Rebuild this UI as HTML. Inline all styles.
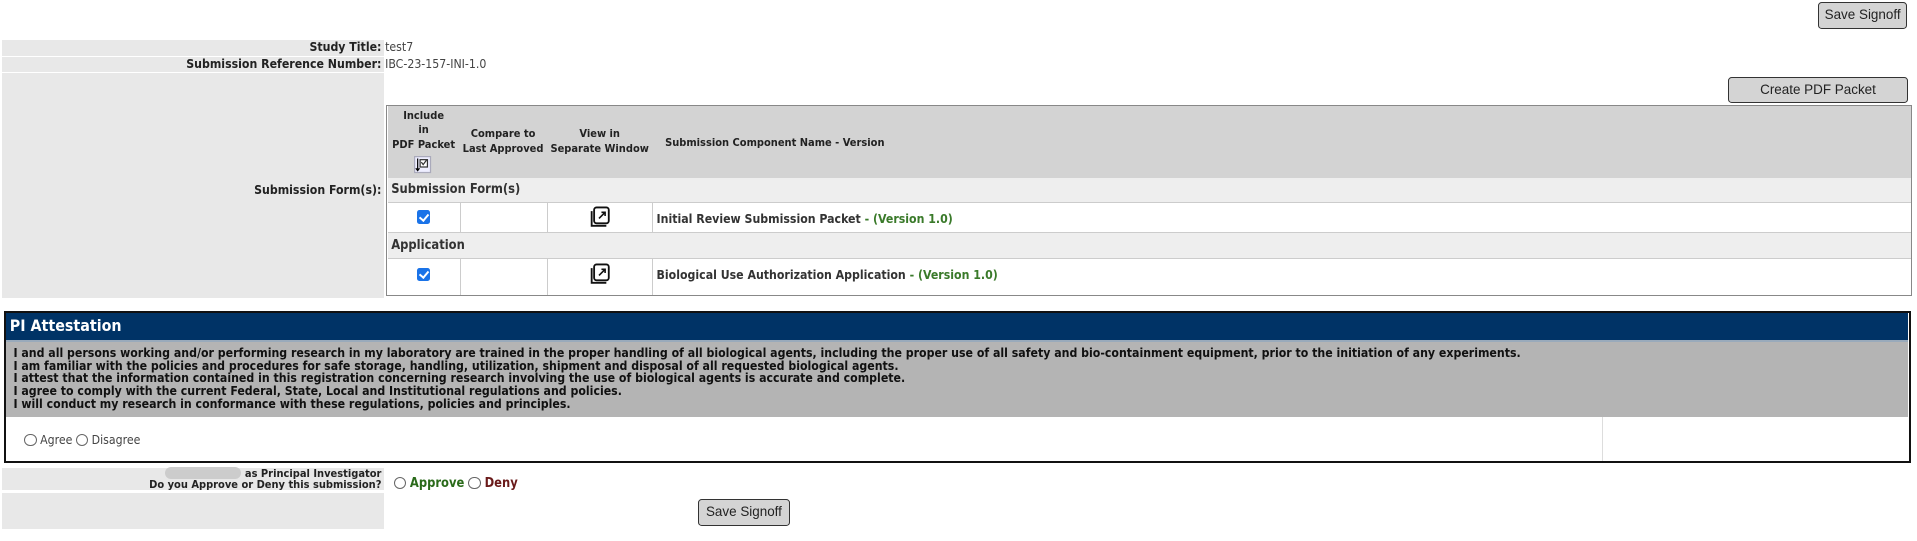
<!DOCTYPE html>
<html><head><meta charset="utf-8"><style>
*{box-sizing:border-box;margin:0;padding:0}
html,body{width:1917px;height:541px;overflow:hidden;background:#fff}
#w{zoom:1.2226;width:1568px;height:443px;position:relative;font-family:"DejaVu Sans Condensed","DejaVu Sans",sans-serif;font-size:10px;color:#222}
.abs{position:absolute}
.btn{position:absolute;background:#d4d4d4;border:1px solid #333;border-radius:3px;font-family:"Liberation Sans",sans-serif;font-size:11px;color:#222;text-align:center}
.lbl{position:absolute;background:#e8e8e8;font-weight:bold;text-align:right;padding-right:2px;font-size:10px}
.b{font-weight:bold}
.cb{position:absolute;width:11px;height:11px;background:#1a73e8;border-radius:2px}
.cb:after{content:"";position:absolute;left:3.5px;top:1px;width:3px;height:6px;border:solid #fff;border-width:0 2px 2px 0;transform:rotate(40deg)}
.radio{display:inline-block;width:10px;height:10px;border:1px solid #666;border-radius:50%;vertical-align:-2px;background:#fff}
.vline{position:absolute;width:1px;background:#ccc}
.ico{position:absolute}
</style></head><body><div id="w">
<div class="btn" style="left:1487px;top:2px;width:73px;height:22px;line-height:20px">Save Signoff</div>

<div class="lbl" style="left:2px;top:33px;width:312px;height:13px;line-height:13px">Study Title:</div>
<div class="abs" style="left:315px;top:33px;line-height:13px;color:#444">test7</div>
<div class="lbl" style="left:2px;top:47px;width:312px;height:12px;line-height:12px">Submission Reference Number:</div>
<div class="abs" style="left:315px;top:47px;line-height:12px;color:#444">IBC-23-157-INI-1.0</div>
<div class="lbl" style="left:2px;top:60px;width:312px;height:184px;line-height:192px">Submission Form(s):</div>

<div class="btn" style="left:1413px;top:63px;width:148px;height:21px;line-height:19px">Create PDF Packet</div>

<div class="abs" style="left:316px;top:86px;width:1248px;height:156px;border:1px solid #888;background:#fff"></div>
<div class="abs" style="left:317px;top:87px;width:1246px;height:59px;background:#d3d3d3"></div>
<div class="abs b" style="left:317px;top:89px;width:59px;text-align:center;font-size:9px;line-height:12px">Include<br>in<br>PDF Packet</div>
<svg class="ico" style="left:339px;top:128px" width="14" height="14" viewBox="0 0 14 14"><rect x="0.5" y="0.5" width="13" height="13" fill="#eef" stroke="#aab"/><rect x="5" y="3" width="6" height="6" fill="#fff" stroke="#333"/><path d="M6 5l1.5 2 3-4" fill="none" stroke="#333"/><path d="M3 2v10M1.5 10l1.5 2 1.5-2" fill="none" stroke="#000"/></svg>
<div class="abs b" style="left:376px;top:104px;width:71px;text-align:center;font-size:9px;line-height:12px">Compare to<br>Last Approved</div>
<div class="abs b" style="left:447px;top:104px;width:87px;text-align:center;font-size:9px;line-height:12px">View in<br>Separate Window</div>
<div class="abs b" style="left:544px;top:111px;font-size:9px;line-height:12px">Submission Component Name - Version</div>

<div class="abs" style="left:317px;top:146px;width:1246px;height:20px;background:#eee;border-bottom:1px solid #ccc"></div>
<div class="abs b" style="left:320px;top:149px;font-size:10.5px;color:#333">Submission Form(s)</div>
<div class="abs" style="left:317px;top:190px;width:1246px;height:22px;background:#eee;border-top:1px solid #ccc;border-bottom:1px solid #ccc"></div>
<div class="abs b" style="left:320px;top:195px;font-size:10.5px;color:#333">Application</div>

<div class="vline" style="left:376px;top:166px;height:24px"></div>
<div class="vline" style="left:447px;top:166px;height:24px"></div>
<div class="vline" style="left:533px;top:166px;height:24px"></div>
<div class="vline" style="left:376px;top:212px;height:29px"></div>
<div class="vline" style="left:447px;top:212px;height:29px"></div>
<div class="vline" style="left:533px;top:212px;height:29px"></div>

<div class="cb" style="left:341px;top:172px"></div>
<div class="cb" style="left:341px;top:219px"></div>
<svg class="ico" style="left:481px;top:168px" width="20" height="20" viewBox="0 0 20 20"><path d="M3 5v12h12" fill="none" stroke="#111" stroke-width="1.5"/><rect x="5" y="2" width="12" height="13" rx="2" fill="#fff" stroke="#111" stroke-width="1.5"/><path d="M9 11l5-5M11 6h3v3" fill="none" stroke="#111" stroke-width="1.3"/></svg>
<svg class="ico" style="left:481px;top:214px" width="20" height="20" viewBox="0 0 20 20"><path d="M3 5v12h12" fill="none" stroke="#111" stroke-width="1.5"/><rect x="5" y="2" width="12" height="13" rx="2" fill="#fff" stroke="#111" stroke-width="1.5"/><path d="M9 11l5-5M11 6h3v3" fill="none" stroke="#111" stroke-width="1.3"/></svg>
<div class="abs b" style="left:537px;top:173px;font-size:10px;color:#333">Initial Review Submission Packet <span style="color:#3a7a2a">- (Version 1.0)</span></div>
<div class="abs b" style="left:537px;top:219px;font-size:10px;color:#333">Biological Use Authorization Application <span style="color:#3a7a2a">- (Version 1.0)</span></div>

<div class="abs" style="left:3px;top:254px;width:1560px;height:125px;border:2px solid #111;background:#fff"></div>
<div class="abs b" style="left:5px;top:256px;width:1556px;height:22px;background:#003366;color:#fff;font-size:13px;line-height:22px;padding-left:3px">PI Attestation</div>
<div class="abs b" style="left:5px;top:278px;width:1556px;height:63px;background:#b4b4b4;border-top:2px solid #9ab;padding:4px 0 0 6px;font-size:10px;line-height:10.5px;color:#111">I and all persons working and/or performing research in my laboratory are trained in the proper handling of all biological agents, including the proper use of all safety and bio-containment equipment, prior to the initiation of any experiments.<br>I am familiar with the policies and procedures for safe storage, handling, utilization, shipment and disposal of all requested biological agents.<br>I attest that the information contained in this registration concerning research involving the use of biological agents is accurate and complete.<br>I agree to comply with the current Federal, State, Local and Institutional regulations and policies.<br>I will conduct my research in conformance with these regulations, policies and principles.</div>
<div class="vline" style="left:1310px;top:341px;height:36px;background:#ddd"></div>
<div class="abs" style="left:20px;top:354px;color:#444"><span class="radio"></span> Agree <span class="radio"></span> Disagree</div>

<div class="lbl" style="left:2px;top:383px;width:312px;height:18px;line-height:9px;font-size:9px">as Principal Investigator<br>Do you Approve or Deny this submission?</div>
<div class="abs" style="left:135px;top:382px;width:62px;height:10px;background:#ccc;border-radius:5px"></div>
<div class="abs b" style="left:322px;top:389px;font-size:10.5px"><span class="radio"></span> <span style="color:#2a6a1a">Approve</span> <span class="radio"></span> <span style="color:#6a1a1a">Deny</span></div>
<div class="lbl" style="left:2px;top:403px;width:312px;height:30px"></div>
<div class="btn" style="left:571px;top:408px;width:75px;height:22px;line-height:20px">Save Signoff</div>
</div></body></html>
